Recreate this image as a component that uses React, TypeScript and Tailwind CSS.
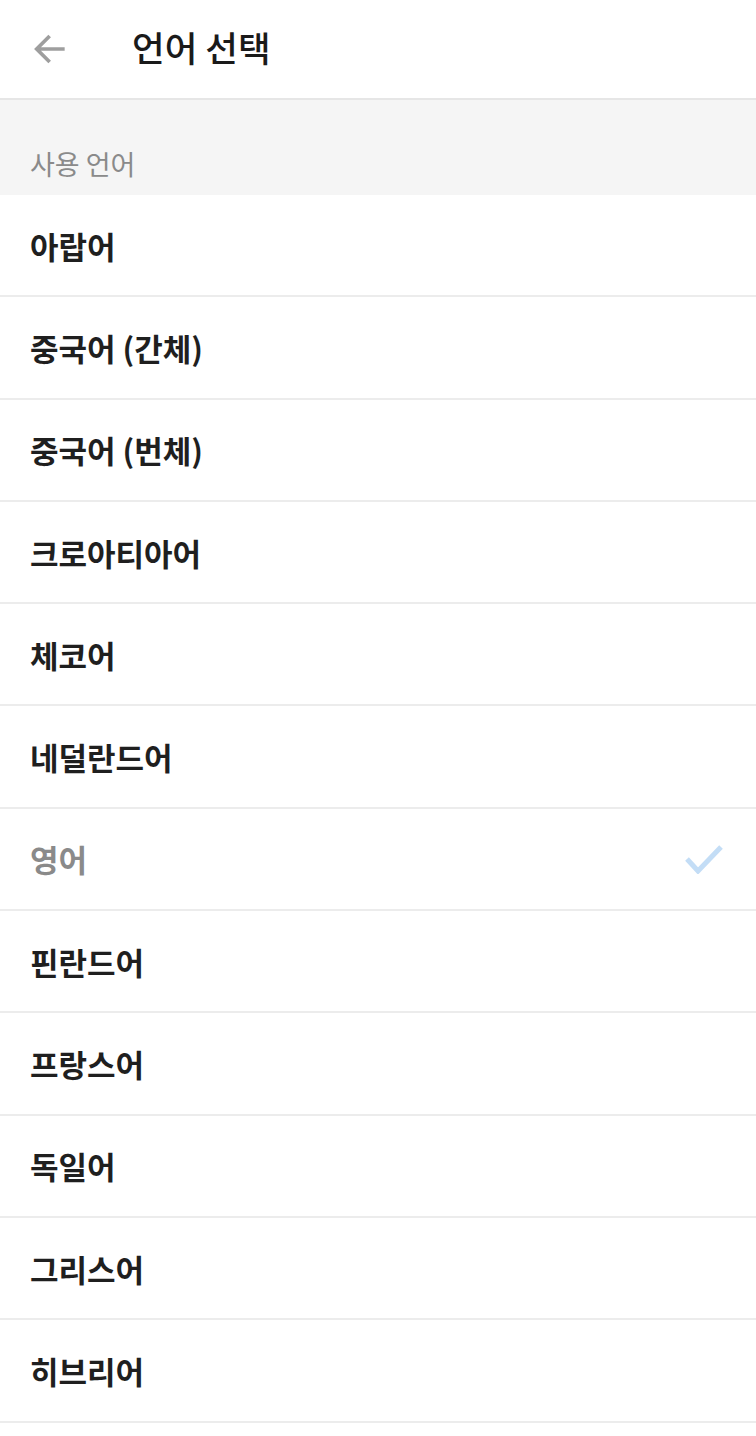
import React from 'react';

const languages = [
  '아랍어',
  '중국어 (간체)',
  '중국어 (번체)',
  '크로아티아어',
  '체코어',
  '네덜란드어',
  '영어',
  '핀란드어',
  '프랑스어',
  '독일어',
  '그리스어',
  '히브리어',
];

const selected = '영어';

export default function App() {
  return (
    <div
      className="w-[756px] h-[1436px] bg-white overflow-hidden"
      style={{ fontFamily: '"Noto Sans CJK KR", "Noto Sans", sans-serif' }}
    >
      {/* Top bar */}
      <header className="h-[100px] flex items-center border-b-2 border-[#e6e6e6] bg-white">
        <div className="w-[132px] flex items-center pl-[30px]">
          <svg width="40" height="40" viewBox="0 0 24 24" fill="none">
            <path d="M20.8 12H4.5M11.8 4.2 4 12l7.8 7.8" stroke="#9e9e9e" strokeWidth="2.2" />
          </svg>
        </div>
        <h1 className="text-[35.5px] font-medium text-[#1a1a1a] leading-none -mt-1">언어 선택</h1>
      </header>

      {/* Section label */}
      <div className="h-[95px] bg-[#f5f5f5] flex items-end pl-[30px] pb-[18px]">
        <span className="text-[27px] text-[#8a8a8a] leading-none">사용 언어</span>
      </div>

      {/* Language list */}
      <ul>
        {languages.map((lang) => (
          <li
            key={lang}
            className="h-[102.3px] flex items-center justify-between pl-[30px] pr-[33px] border-b-2 border-[#ececec]"
          >
            <span
              className={`text-[31px] font-bold leading-none ${lang === selected ? 'text-[#8a8a8a]' : 'text-[#1f1f1f]'}`}
            >
              {lang}
            </span>
            {lang === selected && (
              <svg width="38" height="30" viewBox="0 0 38 30" fill="none">
                <path d="M2 15l11 12L36 3" stroke="#c3ddf6" strokeWidth="5" />
              </svg>
            )}
          </li>
        ))}
      </ul>
    </div>
  );
}
